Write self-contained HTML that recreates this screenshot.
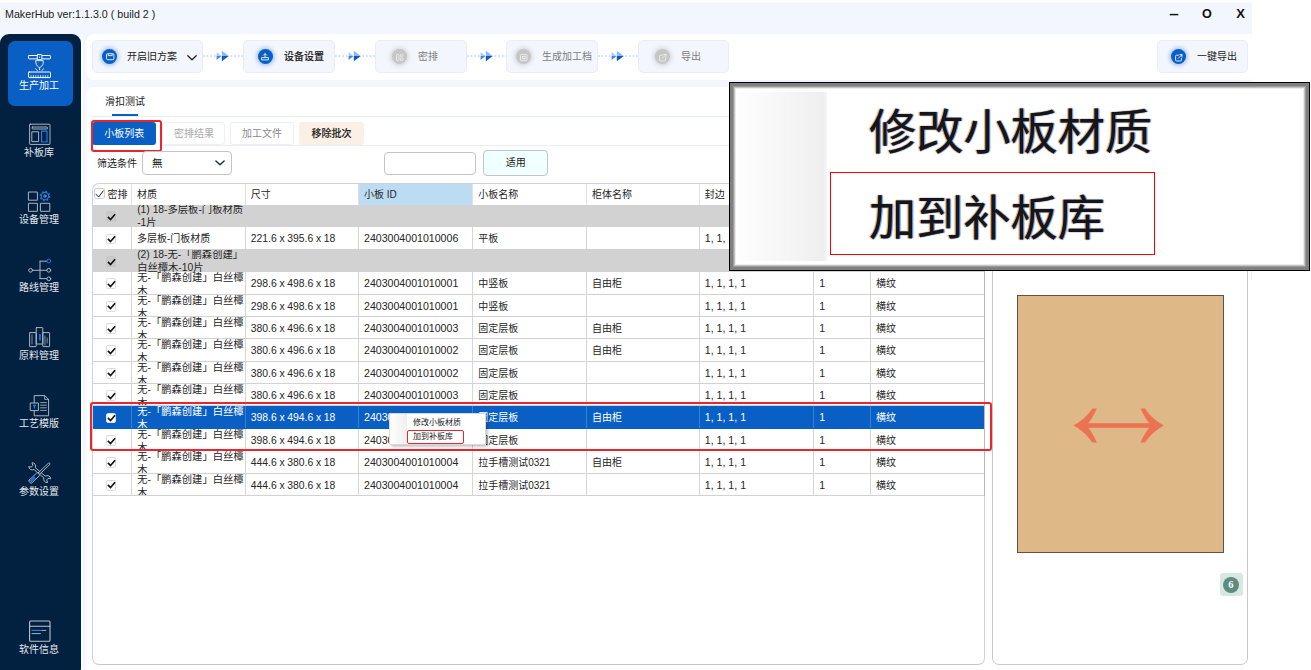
<!DOCTYPE html>
<html lang="zh-CN">
<head>
<meta charset="utf-8">
<title>MakerHub</title>
<style>
*{box-sizing:border-box;margin:0;padding:0}
html,body{width:1311px;height:670px;overflow:hidden;background:#fff}
body{font-family:"Liberation Sans","Noto Sans CJK SC",sans-serif;font-size:10.5px;color:#1a1a1a;position:relative}
.abs{position:absolute}
#app{position:absolute;left:0;top:2px;width:1252px;height:668px;background:#f3f6fd;overflow:hidden}
#title{position:absolute;left:5px;top:4.2px;font-size:10.7px;color:#222;line-height:16px;white-space:nowrap}
.wc{position:absolute;top:3.8px;font-weight:bold;font-size:13px;line-height:16px;color:#111;width:20px;text-align:center}
/* sidebar */
#side{position:absolute;left:0;top:32px;width:81px;height:640px;background:#02203f;border-radius:9px 9px 6px 0}
#side .act{position:absolute;left:8px;top:7px;width:65px;height:65px;background:#0a5fc4;border-radius:7px}
.nav{position:absolute;left:0;width:78px;text-align:center;color:#e4e8ee;font-size:10px;line-height:12px;white-space:nowrap}
.nav.on{color:#fff}
#side svg{position:absolute;overflow:visible}
/* toolbar */
#tool{position:absolute;left:86px;top:32px;width:1170px;height:45.5px;background:#fff;border-radius:8px}
.step{position:absolute;top:6.4px;height:33px;background:#f3f6fd;border:1px solid #e9edf6;border-radius:5px}
.step .c{position:absolute;top:7.8px;width:15px;height:15px;border-radius:50%;background:#0a5fc4;box-shadow:0 0 4px 1.2px rgba(10,95,196,.4)}
.step.off .c{background:#c6c6c6;box-shadow:0 0 4px 1.5px rgba(170,170,170,.45)}
.step .t{position:absolute;top:9px;font-size:10px;line-height:13px;color:#222;white-space:nowrap}
.step.off .t{color:#7d7d7d}
.step svg{position:absolute;overflow:visible}
.conn{position:absolute;top:15.1px;height:14px;width:41px}
/* main */
#main{position:absolute;left:86px;top:85px;width:1170px;height:590px;background:#fff;border-radius:8px}

#main .tab{position:absolute;left:19px;top:8px;font-size:10px;line-height:13px;color:#222}
#main .tabu{position:absolute;left:25.5px;top:26.6px;width:26.4px;height:2px;background:#0a5fc4}
.hl{position:absolute;height:1px;background:#e9edf5}
.btn{position:absolute;top:35.2px;height:22.8px;border-radius:3px;font-size:10px;line-height:24.6px;text-align:center;white-space:nowrap}
.btn.b1{background:#0a5fc4;color:#fff}
.btn.b2{background:#fff;border:1px solid #eef0f5;color:#9a9a9a;line-height:22.6px}
.btn.b3{background:#fbf0e5;color:#222;font-weight:500;-webkit-text-stroke:0.12px #222}
.red{position:absolute;border:2px solid #e8262b;border-radius:3px;pointer-events:none}
#flt{position:absolute;left:11px;top:69.5px;font-size:10px;line-height:13px;color:#222}
.inp{position:absolute;background:#fff;border:1px solid #c4c4c4;border-radius:4px}
#tbl{color:#262626;position:absolute;left:5.5px;top:95.5px;width:893.5px;height:482px;border:1px solid #d2d2d2;border-bottom-color:#c6c6c6;border-radius:7px;overflow:hidden;background:#fff}
#tbl .r{position:absolute;left:0;width:893px;height:22.38px;border-bottom:1px solid #d2d2d2;overflow:hidden}
#tbl .r.h{height:21.5px;border-bottom:none}
#tbl .r.g{background:#d2d2d2;border-bottom:none}
#tbl .r.s{background:#0a5fc4;color:#fff;border-bottom-color:#0a5fc4}
#tbl .c{position:absolute;top:0;height:100%;border-left:1px solid #d6d6d6;white-space:nowrap;font-size:10px;line-height:23.6px;padding-left:5px}
#tbl .c.n{font-size:10.6px}
#tbl .c.n.d{font-size:10.4px;word-spacing:-0.2px}
#tbl .r.h .c{line-height:22.5px;border-left-color:#e2e2e2}
#tbl .r.s .c{border-left-color:#3a7fd0}
#tbl .c.m{white-space:nowrap;line-height:13px;top:-1px;height:40px;font-size:10.3px;border-left:none;padding-left:6.2px}
#tbl .r.g .c.m{top:-2px}
#tbl .vl{position:absolute;top:0;height:100%;width:1px;background:#d6d6d6}
#tbl .r.s .vl{background:#3a7fd0}
#tbl .r.g .c{border-left:none}
.ck{position:absolute;width:10.8px;height:10.8px;border:1px solid #dcdcdc;border-radius:2px;background:#fff}
.r.g .ck{background:#cacaca;border-color:#c6c6c6}
.ck svg{position:absolute;left:0.2px;top:0.6px}
#rp{position:absolute;left:906px;top:95.5px;width:256px;height:482px;border:1px solid #c9c9c9;border-radius:7px;background:#fff}

#ctx{position:absolute;left:389.4px;top:413px;width:97px;height:32px;background:#fff;border:1px solid #d9d9d9;box-shadow:1.5px 1.5px 3px rgba(0,0,0,.28)}
#ctx .gut{position:absolute;left:0;top:0;width:17px;height:100%;background:linear-gradient(90deg,#fff,#efefef)}
#ctx .it{position:absolute;left:22.6px;font-size:8px;line-height:10px;color:#222;white-space:nowrap}
#call{position:absolute;left:729px;top:82px;width:581px;height:189px;background:#fff;border:1px solid #000;box-shadow:inset 0 0 0 3px #808080,inset 0 0 0 4px #9c9c9c,inset 0 0 0 5px #c2c2c2,inset 0 0 0 6px #ececec}
#call .gut{position:absolute;left:9px;top:8.5px;width:88px;height:169px;background:linear-gradient(90deg,#fdfdfd 0%,#f6f6f6 50%,#efefef 96%,#f6f6f6 100%)}
#call .big{position:absolute;left:139px;font-size:47.2px;line-height:50px;color:#15151c;white-space:nowrap;font-weight:400;text-shadow:-1.2px 0 1px rgba(225,130,30,.7),1.2px 0 1px rgba(30,110,230,.7),0 0 1px rgba(20,20,30,.8);filter:blur(.7px)}
#call .rb{position:absolute;left:99.5px;top:88.5px;width:325.5px;height:83px;border:1px solid #f00}
</style>
</head>
<body>
<div id="app">
  <div id="title">MakerHub ver:1.1.3.0 ( build 2 )</div>
  <div class="wc" style="left:1164px;font-size:15px;transform:scaleX(1.15)">–</div>
  <div class="wc" style="left:1197px;font-size:12.6px">O</div>
  <div class="wc" style="left:1230.6px;font-size:13px">X</div>

  <div class="abs" style="left:81px;top:32px;width:2px;height:640px;background:#fcfdff"></div>
  <div id="side">
    <div class="act"></div>

    <svg style="left:0;top:0" width="81" height="636" viewBox="0 34 81 636" fill="none" stroke-linecap="round" stroke-linejoin="round">
      <!-- 生产加工 -->
      <g stroke="#fff" stroke-width="1">
        <rect x="28.5" y="55.5" width="22" height="3.4" rx="0.6"/>
        <rect x="37.3" y="54.6" width="4.6" height="5.2" rx="0.6" fill="#0a5fc4"/>
        <circle cx="39.6" cy="57.2" r="0.6" fill="#fff" stroke="none"/>
        <path d="M36 60.6 H43.2 V63.4 C43.2 65.4 41 66.8 39.6 67.6 C38.2 66.8 36 65.4 36 63.4 Z" stroke="#e9e4d8"/>
        <path d="M39.6 67.6 V69.8" stroke="#e9e4d8"/>
        <path d="M35.6 68.6 L37.4 70.6 M43.6 68.6 L41.8 70.6" stroke-width="0.8"/>
        <rect x="28.5" y="72" width="22" height="5.6" rx="0.6"/>
        <path d="M31 77 V75.6 M33.4 77 V75.6 M35.8 77 V75.6 M38.2 77 V75.6 M40.6 77 V75.6 M43 77 V75.6 M45.4 77 V75.6 M47.8 77 V75.6" stroke-width="0.8"/>
      </g>
      <!-- 补板库 -->
      <g stroke="#b4bcc9" stroke-width="0.95">
        <rect x="29.6" y="124.2" width="20.4" height="20.2" rx="0.6"/>
        <rect x="32.2" y="127" width="15.2" height="2" rx="0.4"/>
        <rect x="32.2" y="131.8" width="6.4" height="9.8"/>
        <rect x="41.6" y="131.2" width="5.4" height="10.8" stroke="#1b7df0" stroke-width="1.2"/>
      </g>
      <!-- 设备管理 -->
      <g stroke="#b4bcc9" stroke-width="0.95">
        <rect x="28.8" y="192" width="8.6" height="8.2"/>
        <rect x="28.8" y="203.3" width="8.6" height="8"/>
        <rect x="40.8" y="203.3" width="9" height="8"/>
        <circle cx="44.9" cy="196.1" r="3.7" stroke="#1b7df0" stroke-width="1.1"/>
        <circle cx="44.9" cy="196.1" r="4.7" stroke="#1b7df0" stroke-width="1.3" stroke-dasharray="1.6 2.09" stroke-linecap="butt"/>
        <circle cx="44.9" cy="196.1" r="1.2" stroke="#9bb6d8" stroke-width="0.8"/>
      </g>
      <!-- 路线管理 -->
      <g stroke="#b4bcc9" stroke-width="0.95">
        <circle cx="30.6" cy="270.3" r="1.9"/>
        <path d="M32.6 270.3 H46.6 M40 261.2 V278.6 M40 261.2 H46.6 M40 278.6 H46.6"/>
        <circle cx="48.8" cy="270.3" r="1.9"/>
        <circle cx="48.8" cy="278.8" r="1.9"/>
        <circle cx="48.8" cy="261" r="1.9" stroke="#1b7df0"/>
      </g>
      <!-- 原料管理 -->
      <g stroke="#b4bcc9" stroke-width="0.95">
        <rect x="29.6" y="332.6" width="6.6" height="14" rx="0.5"/>
        <rect x="36.2" y="327.6" width="6.6" height="16.4" rx="0.5"/>
        <rect x="42.8" y="332.6" width="6.8" height="14" rx="0.5"/>
        <path d="M32 335 V344 M45 336 V345 M47.2 338 V343" stroke-width="0.7"/>
        <path d="M40 334 V340.4" stroke="#1b7df0" stroke-width="1.6" stroke-linecap="butt"/>
      </g>
      <!-- 工艺模版 -->
      <g stroke="#b4bcc9" stroke-width="0.95">
        <path d="M34.6 395.6 H44.6 L48.6 399.4 V415.8 H34.6 Z"/>
        <path d="M44.6 395.6 V399.4 H48.6" stroke-width="0.8"/>
        <path d="M40.6 402.6 H46.4 M40.6 405.2 H46.4 M40.6 407.8 H46.4 M40.6 410.4 H46.4" stroke-width="0.8"/>
        <rect x="30.6" y="403" width="7.8" height="7.6" fill="#02203f"/>
        <path d="M33 405.4 H36 M34.5 405.4 V408.6" stroke="#1b7df0" stroke-width="1.3" stroke-linecap="butt"/>
      </g>
      <!-- 参数设置 -->
      <g stroke="#b4bcc9" stroke-width="0.9" fill="none">
        <g transform="translate(39.75 472.7) rotate(40.3)">
          <path d="M-6.6 -1.3 A3.4 3.4 0 0 0 -12.3 -2.5 L-10 -1 L-10 1 L-12.3 2.5 A3.4 3.4 0 0 0 -6.6 1.3 L6.6 1.3 A3.4 3.4 0 0 0 12.3 2.5 L10 1 L10 -1 L12.3 -2.5 A3.4 3.4 0 0 0 6.6 -1.3 Z" fill="#02203f"/>
        </g>
        <g transform="translate(39.75 472.75) rotate(-43.5)">
          <rect x="-1.5" y="-0.95" width="15.3" height="1.9" rx="0.95" fill="#02203f"/>
          <rect x="-13.8" y="-1.9" width="12.4" height="3.8" rx="1.1" fill="#02203f"/>
          <rect x="-12.9" y="-1.25" width="6.4" height="2.5" fill="#1b6fe0" stroke="none"/>
        </g>
      </g>
      <!-- 软件信息 -->
      <g stroke="#bcc4d0" stroke-width="1.1">
        <rect x="29.6" y="621" width="20.4" height="20.2" rx="1"/>
        <path d="M29.6 626.2 H50"/>
        <path d="M41.6 630.4 H45.8 M32 633.6 H40.4" stroke-width="0.9"/>
        <path d="M32 630.4 H40.4" stroke="#1b7df0" stroke-width="1.3"/>
      </g>
    </svg>
    <div class="nav on" style="top:45.5px">生产加工</div>
    <div class="nav" style="top:112.5px">补板库</div>
    <div class="nav" style="top:180px">设备管理</div>
    <div class="nav" style="top:248px">路线管理</div>
    <div class="nav" style="top:315.5px">原料管理</div>
    <div class="nav" style="top:384px">工艺模版</div>
    <div class="nav" style="top:451.5px">参数设置</div>
    <div class="nav" style="top:609.5px">软件信息</div>

  </div>

  <div id="tool">

    <div class="step" style="left:6px;width:110.5px">
      <div class="c" style="left:9.2px"></div>
      <svg style="left:12.6px;top:12px" width="8.4" height="7.4" viewBox="0 0 8.4 7.4" fill="none" stroke="#fff" stroke-width="0.85"><rect x="0.5" y="0.7" width="7.4" height="6" rx="1.1"/><path d="M2.2 1 V2.6 H6.2 V1"/></svg>
      <div class="t" style="left:34px">开启旧方案</div>
      <svg style="left:93.6px;top:13.6px" width="10" height="6" viewBox="0 0 10 6" fill="none" stroke="#222" stroke-width="1.3" stroke-linecap="round" stroke-linejoin="round"><path d="M0.8 0.8 L5 4.8 L9.2 0.8"/></svg>
    </div>
    <svg class="conn" style="left:116.5px" viewBox="0 0 41 14"><g fill="#cfe0fa"><rect x="0.0" y="6" width="1.8" height="2" rx="0.5"/><rect x="3.5" y="6" width="1.8" height="2" rx="0.5"/><rect x="7.1" y="6" width="1.8" height="2" rx="0.5"/><rect x="10.7" y="6" width="1.8" height="2" rx="0.5"/><rect x="27.4" y="6" width="1.8" height="2" rx="0.5"/><rect x="31.1" y="6" width="1.8" height="2" rx="0.5"/><rect x="34.7" y="6" width="1.8" height="2" rx="0.5"/><rect x="38.3" y="6" width="1.8" height="2" rx="0.5"/></g><path d="M13.6 2.9 L18.4 7 H13.6 Z" fill="#a9c9fb"/><path d="M13.6 7 H18.4 L13.6 11.1 Z" fill="#3f86dc"/><path d="M18.8 1.8 L25.8 7 H18.8 Z" fill="#8db6fb"/><path d="M18.8 7 H25.8 L18.8 12.2 Z" fill="#0a58c2"/></svg>
    <div class="step" style="left:157.3px;width:91.3px">
      <div class="c" style="left:13.7px"></div>
      <svg style="left:17.2px;top:12px" width="8" height="7.6" viewBox="0 0 8 7.6" fill="none" stroke="#fff" stroke-width="0.85"><path d="M0.6 4.6 V6.9 H7.4 V4.6 Z"/><path d="M4 4.4 V0.8 M2.5 2.2 L4 0.7 L5.5 2.2" stroke-linecap="round"/></svg>
      <div class="t" style="left:39.7px;font-weight:500;-webkit-text-stroke:0.12px #222">设备设置</div>
    </div>
    <svg class="conn" style="left:248.6px" viewBox="0 0 41 14"><g fill="#cfe0fa"><rect x="0.0" y="6" width="1.8" height="2" rx="0.5"/><rect x="3.5" y="6" width="1.8" height="2" rx="0.5"/><rect x="7.1" y="6" width="1.8" height="2" rx="0.5"/><rect x="10.7" y="6" width="1.8" height="2" rx="0.5"/><rect x="27.4" y="6" width="1.8" height="2" rx="0.5"/><rect x="31.1" y="6" width="1.8" height="2" rx="0.5"/><rect x="34.7" y="6" width="1.8" height="2" rx="0.5"/><rect x="38.3" y="6" width="1.8" height="2" rx="0.5"/></g><path d="M13.6 2.9 L18.4 7 H13.6 Z" fill="#a9c9fb"/><path d="M13.6 7 H18.4 L13.6 11.1 Z" fill="#3f86dc"/><path d="M18.8 1.8 L25.8 7 H18.8 Z" fill="#8db6fb"/><path d="M18.8 7 H25.8 L18.8 12.2 Z" fill="#0a58c2"/></svg>
    <div class="step off" style="left:288.6px;width:92px">
      <div class="c" style="left:16.8px"></div>
      <svg style="left:20.6px;top:12.4px" width="7.4" height="7.2" viewBox="0 0 7.4 7.2" fill="none" stroke="#f2f2f2" stroke-width="0.8"><rect x="0.5" y="0.5" width="2.4" height="6.2" rx="0.6"/><rect x="4.5" y="0.5" width="2.4" height="2.4" rx="0.6"/><rect x="4.5" y="4.3" width="2.4" height="2.4" rx="0.6"/></svg>
      <div class="t" style="left:42.4px">密排</div>
    </div>
    <svg class="conn" style="left:380.6px" viewBox="0 0 41 14"><g fill="#cfe0fa"><rect x="0.0" y="6" width="1.8" height="2" rx="0.5"/><rect x="3.5" y="6" width="1.8" height="2" rx="0.5"/><rect x="7.1" y="6" width="1.8" height="2" rx="0.5"/><rect x="10.7" y="6" width="1.8" height="2" rx="0.5"/><rect x="27.4" y="6" width="1.8" height="2" rx="0.5"/><rect x="31.1" y="6" width="1.8" height="2" rx="0.5"/><rect x="34.7" y="6" width="1.8" height="2" rx="0.5"/><rect x="38.3" y="6" width="1.8" height="2" rx="0.5"/></g><path d="M13.6 2.9 L18.4 7 H13.6 Z" fill="#a9c9fb"/><path d="M13.6 7 H18.4 L13.6 11.1 Z" fill="#3f86dc"/><path d="M18.8 1.8 L25.8 7 H18.8 Z" fill="#8db6fb"/><path d="M18.8 7 H25.8 L18.8 12.2 Z" fill="#0a58c2"/></svg>
    <div class="step off" style="left:420.4px;width:91.2px">
      <div class="c" style="left:8.9px"></div>
      <svg style="left:12.6px;top:12.4px" width="7.6" height="7.2" viewBox="0 0 7.6 7.2" fill="none" stroke="#f2f2f2" stroke-width="0.8"><rect x="0.5" y="0.5" width="6.6" height="6.2" rx="0.8"/><rect x="2.4" y="2.4" width="2.8" height="2.4"/></svg>
      <div class="t" style="left:34.7px">生成加工档</div>
    </div>
    <svg class="conn" style="left:511.6px" viewBox="0 0 41 14"><g fill="#cfe0fa"><rect x="0.0" y="6" width="1.8" height="2" rx="0.5"/><rect x="3.5" y="6" width="1.8" height="2" rx="0.5"/><rect x="7.1" y="6" width="1.8" height="2" rx="0.5"/><rect x="10.7" y="6" width="1.8" height="2" rx="0.5"/><rect x="27.4" y="6" width="1.8" height="2" rx="0.5"/><rect x="31.1" y="6" width="1.8" height="2" rx="0.5"/><rect x="34.7" y="6" width="1.8" height="2" rx="0.5"/><rect x="38.3" y="6" width="1.8" height="2" rx="0.5"/></g><path d="M13.6 2.9 L18.4 7 H13.6 Z" fill="#a9c9fb"/><path d="M13.6 7 H18.4 L13.6 11.1 Z" fill="#3f86dc"/><path d="M18.8 1.8 L25.8 7 H18.8 Z" fill="#8db6fb"/><path d="M18.8 7 H25.8 L18.8 12.2 Z" fill="#0a58c2"/></svg>
    <div class="step off" style="left:552.3px;width:91px">
      <div class="c" style="left:15.8px"></div>
      <svg style="left:19.6px;top:12.2px" width="7.6" height="7.6" viewBox="0 0 7.6 7.6" fill="none" stroke="#f2f2f2" stroke-width="0.8" stroke-linecap="round"><path d="M3.4 1.2 H1.6 Q0.6 1.2 0.6 2.2 V6 Q0.6 7 1.6 7 H5.4 Q6.4 7 6.4 6 V4.2"/><path d="M3.2 4.4 L7 0.6 M4.8 0.6 H7 V2.8"/></svg>
      <div class="t" style="left:41.7px">导出</div>
    </div>
    <div class="step" style="left:1071px;width:90.7px">
      <div class="c" style="left:13.4px"></div>
      <svg style="left:17.2px;top:12.2px" width="7.6" height="7.6" viewBox="0 0 7.6 7.6" fill="none" stroke="#fff" stroke-width="0.85" stroke-linecap="round"><path d="M3.4 1.2 H1.6 Q0.6 1.2 0.6 2.2 V6 Q0.6 7 1.6 7 H5.4 Q6.4 7 6.4 6 V4.2"/><path d="M3.2 4.4 L7 0.6 M4.8 0.6 H7 V2.8"/></svg>
      <div class="t" style="left:39.1px">一键导出</div>
    </div>

  </div>

  <div id="main">

    <div class="tab">滑扣测试</div><div class="tabu"></div>
    <div class="hl" style="left:5px;top:29px;width:1160px"></div>
    <div class="btn b1" style="left:6.3px;width:63.9px">小板列表</div>
    <div class="btn b2" style="left:76.4px;width:63.1px;color:#a8a8a8">密排结果</div>
    <div class="btn b2" style="left:143.9px;width:64.1px;color:#8a8a8a">加工文件</div>
    <div class="btn b3" style="left:213px;width:64.8px">移除批次</div>
    <div class="red" style="left:4.5px;top:33.4px;width:71.4px;height:31.6px"></div>
    <div class="hl" style="left:76px;top:58.4px;width:1090px"></div>
    <div id="flt">筛选条件</div>
    <div class="inp" style="left:55.9px;top:63.7px;width:89.8px;height:24.8px"><span class="abs" style="left:9px;top:5px;font-size:10.5px;line-height:13px">無</span><svg class="abs" style="left:72px;top:8.6px" width="10" height="6" viewBox="0 0 10 6" fill="none" stroke="#1a2a44" stroke-width="1.4" stroke-linecap="round" stroke-linejoin="round"><path d="M0.9 0.9 L5 4.8 L9.1 0.9"/></svg></div>
    <div class="inp" style="left:298.3px;top:65px;width:91.4px;height:22.7px"></div>
    <div class="inp" style="left:397.3px;top:63px;width:65.1px;height:25.6px;background:#f0ffff;text-align:center;font-size:10px;line-height:23.6px">适用</div>
    <div id="tbl">
            <div class="r h" style="top:0"><div class="ck" style="left:1.3px;top:4.6px;width:11.2px;height:11px;border-color:#cfcfcf"><svg width="9" height="8" viewBox="0 0 9 8" fill="none" stroke="#222" stroke-width="1" stroke-linecap="round" stroke-linejoin="round"><path d="M0.9 4.2 L3.6 7 L8.3 0.9"/></svg></div><div class="abs" style="left:15px;top:0;font-size:10px;line-height:22.5px;white-space:nowrap">密排</div><div class="c" style="left:38.5px;width:113.7px">材质</div><div class="c" style="left:152.2px;width:113.3px">尺寸</div><div class="c" style="background:#bcdcf4;left:265.5px;width:114.2px">小板 ID</div><div class="c" style="left:379.7px;width:113.7px">小板名称</div><div class="c" style="left:493.4px;width:112.9px">柜体名称</div><div class="c" style="left:606.3px;width:114.4px">封边</div><div class="c" style="left:720.7px;width:56.8px">数量</div><div class="c" style="left:777.5px;width:113.9px">纹理</div></div>
      <div class="r g" style="top:21.5px"><div class="ck" style="left:13px;top:6.2px"><svg width="9" height="8" viewBox="0 0 9 8" fill="none" stroke="#111" stroke-width="1.6" stroke-linecap="butt" stroke-linejoin="miter"><path d="M0.9 3.9 L3.5 6.5 L8.1 1.2"/></svg></div><div class="c m" style="left:38.5px;width:113.7px">(1) 18-多层板-门板材质<br>-1片</div></div>
      <div class="r" style="top:43.88px"><div class="ck" style="left:13px;top:6.2px"><svg width="9" height="8" viewBox="0 0 9 8" fill="none" stroke="#111" stroke-width="1.6" stroke-linecap="butt" stroke-linejoin="miter"><path d="M0.9 3.9 L3.5 6.5 L8.1 1.2"/></svg></div><div class="c" style="left:38.5px;width:113.7px">多层板-门板材质</div><div class="c n d" style="left:152.2px;width:113.3px">221.6 x 395.6 x 18</div><div class="c n" style="left:265.5px;width:114.2px">2403004001010006</div><div class="c" style="left:379.7px;width:113.7px">平板</div><div class="c" style="left:493.4px;width:112.9px"></div><div class="c n" style="left:606.3px;width:114.4px">1, 1, 1, 1</div><div class="c n" style="left:720.7px;width:56.8px">1</div><div class="c" style="left:777.5px;width:113.9px">横纹</div></div>
      <div class="r g" style="top:66.26px"><div class="ck" style="left:13px;top:6.2px"><svg width="9" height="8" viewBox="0 0 9 8" fill="none" stroke="#111" stroke-width="1.6" stroke-linecap="butt" stroke-linejoin="miter"><path d="M0.9 3.9 L3.5 6.5 L8.1 1.2"/></svg></div><div class="c m" style="left:38.5px;width:113.7px">(2) 18-无-「鹏森创建」<br>白丝橝木-10片</div></div>
      <div class="r" style="top:88.64px"><div class="ck" style="left:13px;top:6.2px"><svg width="9" height="8" viewBox="0 0 9 8" fill="none" stroke="#111" stroke-width="1.6" stroke-linecap="butt" stroke-linejoin="miter"><path d="M0.9 3.9 L3.5 6.5 L8.1 1.2"/></svg></div><div class="vl" style="left:38.5px"></div><div class="c m" style="left:38.5px;width:113.7px">无-「鹏森创建」白丝橝<br>木</div><div class="c n d" style="left:152.2px;width:113.3px">298.6 x 498.6 x 18</div><div class="c n" style="left:265.5px;width:114.2px">2403004001010001</div><div class="c" style="left:379.7px;width:113.7px">中竖板</div><div class="c" style="left:493.4px;width:112.9px">自由柜</div><div class="c n" style="left:606.3px;width:114.4px">1, 1, 1, 1</div><div class="c n" style="left:720.7px;width:56.8px">1</div><div class="c" style="left:777.5px;width:113.9px">横纹</div></div>
      <div class="r" style="top:111.02px"><div class="ck" style="left:13px;top:6.2px"><svg width="9" height="8" viewBox="0 0 9 8" fill="none" stroke="#111" stroke-width="1.6" stroke-linecap="butt" stroke-linejoin="miter"><path d="M0.9 3.9 L3.5 6.5 L8.1 1.2"/></svg></div><div class="vl" style="left:38.5px"></div><div class="c m" style="left:38.5px;width:113.7px">无-「鹏森创建」白丝橝<br>木</div><div class="c n d" style="left:152.2px;width:113.3px">298.6 x 498.6 x 18</div><div class="c n" style="left:265.5px;width:114.2px">2403004001010001</div><div class="c" style="left:379.7px;width:113.7px">中竖板</div><div class="c" style="left:493.4px;width:112.9px"></div><div class="c n" style="left:606.3px;width:114.4px">1, 1, 1, 1</div><div class="c n" style="left:720.7px;width:56.8px">1</div><div class="c" style="left:777.5px;width:113.9px">横纹</div></div>
      <div class="r" style="top:133.4px"><div class="ck" style="left:13px;top:6.2px"><svg width="9" height="8" viewBox="0 0 9 8" fill="none" stroke="#111" stroke-width="1.6" stroke-linecap="butt" stroke-linejoin="miter"><path d="M0.9 3.9 L3.5 6.5 L8.1 1.2"/></svg></div><div class="vl" style="left:38.5px"></div><div class="c m" style="left:38.5px;width:113.7px">无-「鹏森创建」白丝橝<br>木</div><div class="c n d" style="left:152.2px;width:113.3px">380.6 x 496.6 x 18</div><div class="c n" style="left:265.5px;width:114.2px">2403004001010003</div><div class="c" style="left:379.7px;width:113.7px">固定层板</div><div class="c" style="left:493.4px;width:112.9px">自由柜</div><div class="c n" style="left:606.3px;width:114.4px">1, 1, 1, 1</div><div class="c n" style="left:720.7px;width:56.8px">1</div><div class="c" style="left:777.5px;width:113.9px">横纹</div></div>
      <div class="r" style="top:155.78px"><div class="ck" style="left:13px;top:6.2px"><svg width="9" height="8" viewBox="0 0 9 8" fill="none" stroke="#111" stroke-width="1.6" stroke-linecap="butt" stroke-linejoin="miter"><path d="M0.9 3.9 L3.5 6.5 L8.1 1.2"/></svg></div><div class="vl" style="left:38.5px"></div><div class="c m" style="left:38.5px;width:113.7px">无-「鹏森创建」白丝橝<br>木</div><div class="c n d" style="left:152.2px;width:113.3px">380.6 x 496.6 x 18</div><div class="c n" style="left:265.5px;width:114.2px">2403004001010002</div><div class="c" style="left:379.7px;width:113.7px">固定层板</div><div class="c" style="left:493.4px;width:112.9px">自由柜</div><div class="c n" style="left:606.3px;width:114.4px">1, 1, 1, 1</div><div class="c n" style="left:720.7px;width:56.8px">1</div><div class="c" style="left:777.5px;width:113.9px">横纹</div></div>
      <div class="r" style="top:178.16px"><div class="ck" style="left:13px;top:6.2px"><svg width="9" height="8" viewBox="0 0 9 8" fill="none" stroke="#111" stroke-width="1.6" stroke-linecap="butt" stroke-linejoin="miter"><path d="M0.9 3.9 L3.5 6.5 L8.1 1.2"/></svg></div><div class="vl" style="left:38.5px"></div><div class="c m" style="left:38.5px;width:113.7px">无-「鹏森创建」白丝橝<br>木</div><div class="c n d" style="left:152.2px;width:113.3px">380.6 x 496.6 x 18</div><div class="c n" style="left:265.5px;width:114.2px">2403004001010002</div><div class="c" style="left:379.7px;width:113.7px">固定层板</div><div class="c" style="left:493.4px;width:112.9px"></div><div class="c n" style="left:606.3px;width:114.4px">1, 1, 1, 1</div><div class="c n" style="left:720.7px;width:56.8px">1</div><div class="c" style="left:777.5px;width:113.9px">横纹</div></div>
      <div class="r" style="top:200.54px"><div class="ck" style="left:13px;top:6.2px"><svg width="9" height="8" viewBox="0 0 9 8" fill="none" stroke="#111" stroke-width="1.6" stroke-linecap="butt" stroke-linejoin="miter"><path d="M0.9 3.9 L3.5 6.5 L8.1 1.2"/></svg></div><div class="vl" style="left:38.5px"></div><div class="c m" style="left:38.5px;width:113.7px">无-「鹏森创建」白丝橝<br>木</div><div class="c n d" style="left:152.2px;width:113.3px">380.6 x 496.6 x 18</div><div class="c n" style="left:265.5px;width:114.2px">2403004001010003</div><div class="c" style="left:379.7px;width:113.7px">固定层板</div><div class="c" style="left:493.4px;width:112.9px"></div><div class="c n" style="left:606.3px;width:114.4px">1, 1, 1, 1</div><div class="c n" style="left:720.7px;width:56.8px">1</div><div class="c" style="left:777.5px;width:113.9px">横纹</div></div>
      <div class="r s" style="top:222.92px"><div class="ck" style="left:13px;top:6.2px"><svg width="9" height="8" viewBox="0 0 9 8" fill="none" stroke="#111" stroke-width="1.6" stroke-linecap="butt" stroke-linejoin="miter"><path d="M0.9 3.9 L3.5 6.5 L8.1 1.2"/></svg></div><div class="vl" style="left:38.5px"></div><div class="c m" style="left:38.5px;width:113.7px">无-「鹏森创建」白丝橝<br>木</div><div class="c n d" style="left:152.2px;width:113.3px">398.6 x 494.6 x 18</div><div class="c n" style="left:265.5px;width:114.2px">2403004001010005</div><div class="c" style="left:379.7px;width:113.7px">固定层板</div><div class="c" style="left:493.4px;width:112.9px">自由柜</div><div class="c n" style="left:606.3px;width:114.4px">1, 1, 1, 1</div><div class="c n" style="left:720.7px;width:56.8px">1</div><div class="c" style="left:777.5px;width:113.9px">横纹</div></div>
      <div class="r" style="top:245.3px"><div class="ck" style="left:13px;top:6.2px"><svg width="9" height="8" viewBox="0 0 9 8" fill="none" stroke="#111" stroke-width="1.6" stroke-linecap="butt" stroke-linejoin="miter"><path d="M0.9 3.9 L3.5 6.5 L8.1 1.2"/></svg></div><div class="vl" style="left:38.5px"></div><div class="c m" style="left:38.5px;width:113.7px">无-「鹏森创建」白丝橝<br>木</div><div class="c n d" style="left:152.2px;width:113.3px">398.6 x 494.6 x 18</div><div class="c n" style="left:265.5px;width:114.2px">2403004001010005</div><div class="c" style="left:379.7px;width:113.7px">固定层板</div><div class="c" style="left:493.4px;width:112.9px"></div><div class="c n" style="left:606.3px;width:114.4px">1, 1, 1, 1</div><div class="c n" style="left:720.7px;width:56.8px">1</div><div class="c" style="left:777.5px;width:113.9px">横纹</div></div>
      <div class="r" style="top:267.68px"><div class="ck" style="left:13px;top:6.2px"><svg width="9" height="8" viewBox="0 0 9 8" fill="none" stroke="#111" stroke-width="1.6" stroke-linecap="butt" stroke-linejoin="miter"><path d="M0.9 3.9 L3.5 6.5 L8.1 1.2"/></svg></div><div class="vl" style="left:38.5px"></div><div class="c m" style="left:38.5px;width:113.7px">无-「鹏森创建」白丝橝<br>木</div><div class="c n d" style="left:152.2px;width:113.3px">444.6 x 380.6 x 18</div><div class="c n" style="left:265.5px;width:114.2px">2403004001010004</div><div class="c" style="left:379.7px;width:113.7px">拉手槽测试0321</div><div class="c" style="left:493.4px;width:112.9px">自由柜</div><div class="c n" style="left:606.3px;width:114.4px">1, 1, 1, 1</div><div class="c n" style="left:720.7px;width:56.8px">1</div><div class="c" style="left:777.5px;width:113.9px">横纹</div></div>
      <div class="r" style="top:290.06px"><div class="ck" style="left:13px;top:6.2px"><svg width="9" height="8" viewBox="0 0 9 8" fill="none" stroke="#111" stroke-width="1.6" stroke-linecap="butt" stroke-linejoin="miter"><path d="M0.9 3.9 L3.5 6.5 L8.1 1.2"/></svg></div><div class="vl" style="left:38.5px"></div><div class="c m" style="left:38.5px;width:113.7px">无-「鹏森创建」白丝橝<br>木</div><div class="c n d" style="left:152.2px;width:113.3px">444.6 x 380.6 x 18</div><div class="c n" style="left:265.5px;width:114.2px">2403004001010004</div><div class="c" style="left:379.7px;width:113.7px">拉手槽测试0321</div><div class="c" style="left:493.4px;width:112.9px"></div><div class="c n" style="left:606.3px;width:114.4px">1, 1, 1, 1</div><div class="c n" style="left:720.7px;width:56.8px">1</div><div class="c" style="left:777.5px;width:113.9px">横纹</div></div>
    </div>
    <div class="abs" style="left:897.6px;top:96.5px;width:1.4px;height:312.4px;background:#b9b9b9"></div>
    <div id="rp">
      <div class="abs" style="left:24px;top:111.5px;width:207px;height:257.6px;background:#deb887;border:1px solid #5c5346"></div>
      <svg class="abs" style="left:77px;top:221.5px" width="98" height="42" viewBox="1070 405 98 42" fill="#ec7254"><rect x="1086" y="423.2" width="65.4" height="4.6"/><path d="M1073.5 425.5 C1082 421 1088 415 1092.3 408.5 L1096.8 408.5 C1094.6 414 1091.6 419 1088.2 423.2 L1088.2 427.8 C1091.6 432 1094.6 437 1096.8 442.6 L1092.3 442.6 C1088 436 1082 430 1073.5 425.5 Z"/><path d="M 1163.9 425.5 C 1155.4 421.0 1149.4 415.0 1145.1 408.5 L 1140.6 408.5 C 1142.8 414.0 1145.8 419.0 1149.2 423.2 L 1149.2 427.8 C 1145.8 432.0 1142.8 437.0 1140.6 442.6 L 1145.1 442.6 C 1149.4 436.0 1155.4 430.0 1163.9 425.5 Z"/></svg>
      <div class="abs" style="left:226.5px;top:389.5px;width:23px;height:23px;border-radius:3px;background:#d7e7e1"></div>
      <div class="abs" style="left:229.9px;top:393.1px;width:16.2px;height:16.2px;border-radius:50%;background:#5e8c7e;color:#fff;font-family:'Liberation Serif',serif;font-weight:bold;font-size:10.5px;line-height:16.2px;text-align:center">6</div>
    </div>

  </div>
</div>

  <div class="red" style="left:89.6px;top:402px;width:902.4px;height:49px"></div>
  <div id="ctx"><div class="gut"></div>
    <div class="it" style="top:3.7px">修改小板材质</div>
    <div class="it" style="top:17.9px">加到补板库</div>
    <div class="red" style="left:16.6px;top:15.8px;width:57.2px;height:14px;border-radius:2px;border-width:1.5px"></div>
  </div>
  <div class="abs" style="left:1251px;top:271px;width:1px;height:9px;background:#ececec"></div>
  <div id="call"><div class="gut"></div>
    <div class="big" style="top:25px">修改小板材质</div>
    <div class="big" style="top:111px">加到补板库</div>
    <div class="rb"></div>
  </div>

</body>
</html>
